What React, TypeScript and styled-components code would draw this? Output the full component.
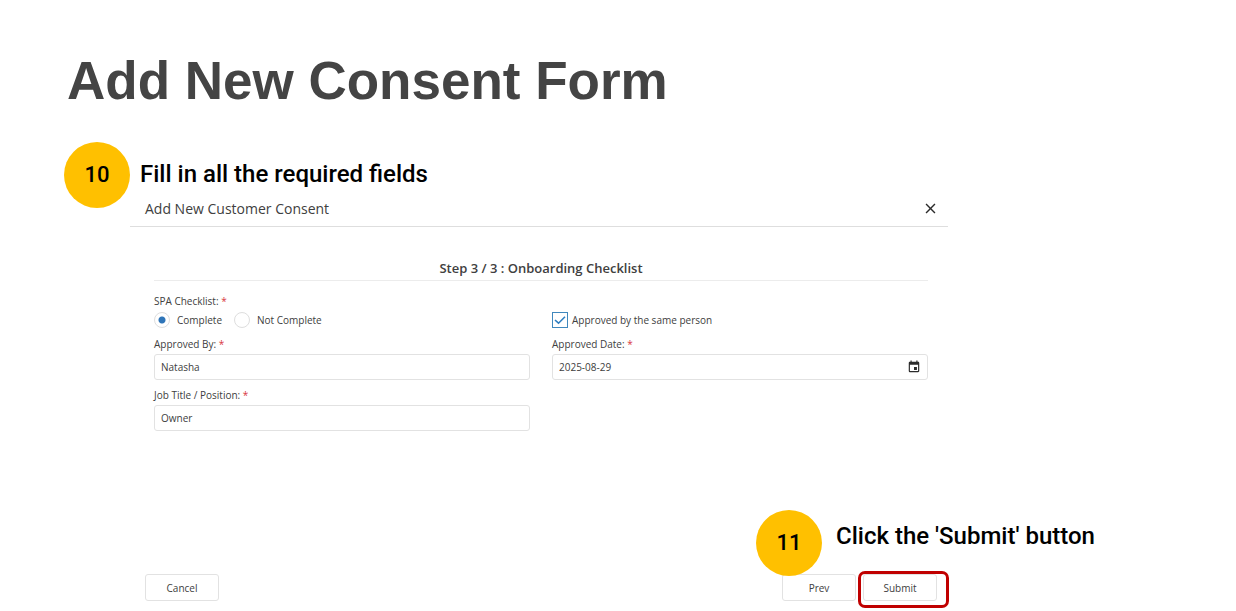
import React, { useState } from "react";
import styled, { createGlobalStyle } from "styled-components";
import { MdClose, MdEvent } from "react-icons/md";

const uiFont = `"Open Sans", "Noto Sans", sans-serif`;
const calloutFont = `Roboto, "Liberation Sans", sans-serif`;

const GlobalStyle = createGlobalStyle`
  *, *::before, *::after { box-sizing: border-box; }
  body { margin: 0; background: #fff; color: #404040; font-family: ${uiFont}; }
`;

const Page = styled.main`
  padding: 48px 64px 0;
`;

const PageTitle = styled.h1`
  margin: 0 0 28px;
  padding-left: 3px;
  font: bold 53px/66px "Liberation Sans", Arial, sans-serif;
  color: #444;
`;

const Walkthrough = styled.div`
  display: grid;
  grid-template-columns: 66px minmax(0, 818px);
`;

const StepBadge = styled.span`
  flex: none;
  display: flex;
  align-items: center;
  justify-content: center;
  width: 66px;
  height: 66px;
  border-radius: 50%;
  background: #ffc000;
  color: #000;
  font: 500 22px/28px ${calloutFont};
`;

const Instruction = styled.p`
  margin: 0;
  color: #000;
  font: 500 24px/30px ${calloutFont};
  white-space: nowrap;
`;

const FirstInstruction = styled(Instruction)`
  padding: 17px 0 0 10px;
`;

const Dialog = styled.form`
  display: flex;
  flex-direction: column;
`;

const DialogHeader = styled.header`
  display: flex;
  align-items: center;
  justify-content: space-between;
  height: 38px;
  padding: 2px 9px 0 15px;
  border-bottom: 1px solid #dedede;
`;

const DialogTitle = styled.h2`
  margin: 0;
  font-size: 14px;
  line-height: 20px;
  font-weight: 400;
`;

const IconButton = styled.button`
  display: flex;
  padding: 0;
  border: 0;
  background: none;
  color: #2b2b2b;
  cursor: pointer;
`;

const DialogBody = styled.div`
  padding: 32px 20px 0 24px;
`;

const StepHeading = styled.h3`
  margin: 0 0 12px;
  padding-bottom: 2px;
  border-bottom: 1px solid #ececec;
  text-align: center;
  font-size: 13px;
  line-height: 19px;
  font-weight: 600;
`;

const Fields = styled.div`
  display: grid;
  grid-template-columns: 1fr 1fr;
  gap: 7px 22px;
`;

const Field = styled.div`
  display: flex;
  flex-direction: column;
  justify-content: flex-end;
  gap: 2px;
`;

const RadioField = styled.fieldset`
  margin: 0;
  padding: 0;
  border: 0;
`;

const labelText = `
  font-size: 10px;
  line-height: 16px;
`;

const FieldLabel = styled.label`
  ${labelText}
`;

const FieldLegend = styled.legend`
  padding: 0 0 2px;
  ${labelText}
`;

const Required = styled.span`
  color: #d9363e;
`;

const Options = styled.div`
  display: flex;
  gap: 12px;
`;

const OptionLabel = styled.label<{ $gap: number }>`
  display: flex;
  align-items: center;
  gap: ${({ $gap }) => $gap}px;
  height: 18px;
  font-size: 10px;
  line-height: 16px;
`;

const Radio = styled.input`
  appearance: none;
  width: 16px;
  height: 16px;
  margin: 0;
  border: 1px solid #dedede;
  border-radius: 50%;
  background: #fff;

  &:checked {
    background: radial-gradient(circle, #2f75b8 3px, #fff 4px);
  }
`;

const CheckboxWrap = styled.span`
  display: grid;
  width: 16px;
  height: 16px;

  & > * {
    grid-area: 1 / 1;
  }

  svg {
    pointer-events: none;
  }

  input:not(:checked) + svg {
    visibility: hidden;
  }
`;

const Checkbox = styled.input`
  appearance: none;
  width: 16px;
  height: 16px;
  margin: 0;
  border: 1px solid #4088bd;
  background: #fff;
`;

const InputFrame = styled.div`
  display: flex;
  align-items: center;
  height: 26px;
  padding: 0 6px;
  border: 1px solid #e2e2e2;
  border-radius: 3px;
`;

const TextInput = styled.input`
  flex: 1;
  min-width: 0;
  padding: 0;
  border: 0;
  outline: 0;
  background: none;
  color: inherit;
  font: 10px/16px ${uiFont};
`;

const DialogFooter = styled.footer`
  display: flex;
  justify-content: space-between;
  margin-top: 143px;
  padding: 0 11px 8px 15px;
`;

const Actions = styled.div`
  position: relative;
  display: flex;
  gap: 7px;
`;

const Button = styled.button`
  width: 74px;
  height: 27px;
  padding: 0;
  border: 1px solid #e2e2e2;
  border-radius: 3px;
  background: #fff;
  color: #404040;
  font: 10px/16px ${uiFont};
  cursor: pointer;
`;

const Highlight = styled.span`
  position: relative;
  display: flex;

  &::after {
    content: "";
    position: absolute;
    inset: -3px -12px -7px -5px;
    border: 3px solid #c00000;
    border-radius: 7px;
    pointer-events: none;
  }
`;

const SubmitCallout = styled.div`
  position: absolute;
  bottom: calc(100% - 2px);
  left: -26px;
  display: flex;
  gap: 14px;
  pointer-events: none;

  ${Instruction} {
    padding-top: 11px;
  }
`;

type TextFieldProps = { id: string; label: string; initial: string; children?: React.ReactNode };

function TextField({ id, label, initial, children }: TextFieldProps) {
  const [value, setValue] = useState(initial);
  return (
    <Field>
      <FieldLabel htmlFor={id}>
        {label}: <Required>*</Required>
      </FieldLabel>
      <InputFrame>
        <TextInput id={id} type="text" value={value} required onChange={(e) => setValue(e.target.value)} />
        {children}
      </InputFrame>
    </Field>
  );
}

export default function App() {
  return (
    <>
      <GlobalStyle />
      <Page>
        <PageTitle>Add New Consent Form</PageTitle>
        <Walkthrough>
          <StepBadge>10</StepBadge>
          <div>
            <FirstInstruction>Fill in all the required fields</FirstInstruction>
            <Dialog onSubmit={(e) => e.preventDefault()}>
              <DialogHeader>
                <DialogTitle>Add New Customer Consent</DialogTitle>
                <IconButton type="button" aria-label="Close">
                  <MdClose size={17} />
                </IconButton>
              </DialogHeader>
              <DialogBody>
                <StepHeading>Step 3 / 3 : Onboarding Checklist</StepHeading>
                <Fields>
                  <RadioField>
                    <FieldLegend>
                      SPA Checklist: <Required>*</Required>
                    </FieldLegend>
                    <Options>
                      <OptionLabel $gap={7}>
                        <Radio type="radio" name="spa" defaultChecked />
                        Complete
                      </OptionLabel>
                      <OptionLabel $gap={7}>
                        <Radio type="radio" name="spa" />
                        Not Complete
                      </OptionLabel>
                    </Options>
                  </RadioField>
                  <Field>
                    <OptionLabel $gap={4}>
                      <CheckboxWrap>
                        <Checkbox type="checkbox" defaultChecked />
                        <svg width="16" height="16" viewBox="0 0 16 16" fill="none" aria-hidden="true">
                          <path d="M3 8l3.5 3.2L13 4.8" stroke="#2f7fc1" strokeWidth="1.6" />
                        </svg>
                      </CheckboxWrap>
                      Approved by the same person
                    </OptionLabel>
                  </Field>
                  <TextField id="approved-by" label="Approved By" initial="Natasha" />
                  <TextField id="approved-date" label="Approved Date" initial="2025-08-29">
                    <IconButton type="button" aria-label="Choose date">
                      <MdEvent size={14} />
                    </IconButton>
                  </TextField>
                  <TextField id="job-title" label="Job Title / Position" initial="Owner" />
                </Fields>
              </DialogBody>
              <DialogFooter>
                <Button type="button">Cancel</Button>
                <Actions>
                  <Button type="button">Prev</Button>
                  <Highlight>
                    <Button type="submit">Submit</Button>
                  </Highlight>
                  <SubmitCallout>
                    <StepBadge>11</StepBadge>
                    <Instruction>Click the 'Submit' button</Instruction>
                  </SubmitCallout>
                </Actions>
              </DialogFooter>
            </Dialog>
          </div>
        </Walkthrough>
      </Page>
    </>
  );
}
